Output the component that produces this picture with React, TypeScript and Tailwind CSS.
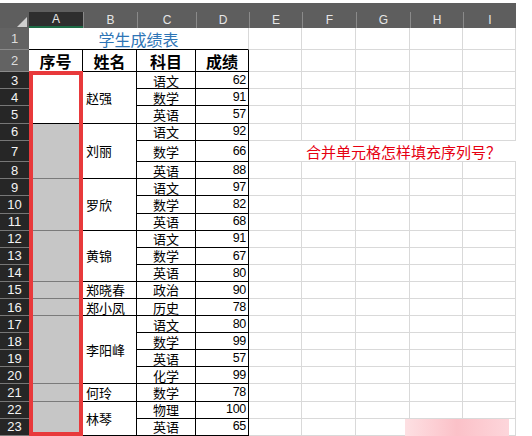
import React from 'react';

// Fonts
const CJK = "font-['Noto_Sans_CJK_SC','Noto_Sans',sans-serif]";
const NUM = "font-['Liberation_Sans','Noto_Sans_CJK_SC',sans-serif]";

// Excel row -> grid row-start (grid row 1 is the column header strip)
const ROW: Record<number, string> = {
    1: 'row-start-2',
    2: 'row-start-3',
    3: 'row-start-4',
    4: 'row-start-5',
    5: 'row-start-6',
    6: 'row-start-7',
    7: 'row-start-8',
    8: 'row-start-9',
    9: 'row-start-10',
    10: 'row-start-11',
    11: 'row-start-12',
    12: 'row-start-13',
    13: 'row-start-14',
    14: 'row-start-15',
    15: 'row-start-16',
    16: 'row-start-17',
    17: 'row-start-18',
    18: 'row-start-19',
    19: 'row-start-20',
    20: 'row-start-21',
    21: 'row-start-22',
    22: 'row-start-23',
    23: 'row-start-24',
};

const SPAN: Record<number, string> = {
    1: 'row-span-1',
    2: 'row-span-2',
    3: 'row-span-3',
    4: 'row-span-4',
};

type Group = {
    name: string;
    start: number;
    subjects: [string, number][];
};

const groups: Group[] = [
    { name: '赵强', start: 3, subjects: [['语文', 62], ['数学', 91], ['英语', 57]] },
    { name: '刘丽', start: 6, subjects: [['语文', 92], ['数学', 66], ['英语', 88]] },
    { name: '罗欣', start: 9, subjects: [['语文', 97], ['数学', 82], ['英语', 68]] },
    { name: '黄锦', start: 12, subjects: [['语文', 91], ['数学', 67], ['英语', 80]] },
    { name: '郑晓春', start: 15, subjects: [['政治', 90]] },
    { name: '郑小凤', start: 16, subjects: [['历史', 78]] },
    {
        name: '李阳峰',
        start: 17,
        subjects: [['语文', 80], ['数学', 99], ['英语', 57], ['化学', 99]],
    },
    { name: '何玲', start: 21, subjects: [['数学', 78]] },
    { name: '林琴', start: 22, subjects: [['物理', 100], ['英语', 65]] },
];

const colHeaders = [
    { letter: 'B', col: 'col-start-3' },
    { letter: 'C', col: 'col-start-4' },
    { letter: 'D', col: 'col-start-5' },
    { letter: 'E', col: 'col-start-6' },
    { letter: 'F', col: 'col-start-7' },
    { letter: 'G', col: 'col-start-8' },
    { letter: 'H', col: 'col-start-9' },
    { letter: 'I', col: 'col-start-10' },
];

const rowNumbers = Array.from({ length: 23 }, (_, i) => i + 1);

const App = () => {
    return (
        <div className="w-[532px] h-[436px] overflow-hidden bg-white relative pt-[3px]">
            {/* Top strip above column letters */}
            <div className="w-[516px] h-[9px] bg-[#5e5e5e]" />

            <div className="grid w-[516px] grid-cols-[29px_54px_54px_59px_53px_53px_54px_54px_53px_53px] grid-rows-[16px_22px_22px_repeat(4,17.2px)_21.5px_repeat(16,17.1px)]">
                {/* Corner */}
                <div className="row-start-1 col-start-1 bg-[#5e5e5e] flex items-end justify-end pr-[2px] pb-[1px]">
                    <svg width="10" height="10" viewBox="0 0 10 10">
                        <polygon points="10,0 10,10 0,10" fill="#cfcfcf" />
                    </svg>
                </div>

                {/* Column letters */}
                <div
                    className={`row-start-1 col-start-2 bg-[#2e2e2e] border-b-2 border-[#1d6b45] flex items-center justify-center text-[12px] text-[#e6e6e6] ${NUM}`}
                >
                    A
                </div>
                {colHeaders.map((h) => (
                    <div
                        key={h.letter}
                        className={`row-start-1 ${h.col} bg-[#5e5e5e] border-l border-[#8a8a8a] flex items-center justify-center text-[12px] text-[#e6e6e6] ${NUM}`}
                    >
                        {h.letter}
                    </div>
                ))}

                {/* Row numbers */}
                {rowNumbers.map((n) => (
                    <div
                        key={n}
                        className={`col-start-1 ${ROW[n]} flex items-center justify-center text-[13px] leading-none ${NUM} ${
                            n <= 2
                                ? 'bg-[#636363] text-[#dcdcdc] border-b border-[#8a8a8a]'
                                : 'bg-[#262626] text-[#f4f4f4] border-b border-[#777777]'
                        }`}
                    >
                        {n}
                    </div>
                ))}

                {/* Title */}
                <div
                    className={`col-start-2 col-span-4 row-start-2 border-b border-r border-b-black border-r-[#d9d9d9] flex items-center justify-center text-[16px] leading-none text-[#2e75b6] ${CJK}`}
                >
                    学生成绩表
                </div>

                {/* Header row */}
                {[
                    { t: '序号', col: 'col-start-2' },
                    { t: '姓名', col: 'col-start-3' },
                    { t: '科目', col: 'col-start-4' },
                    { t: '成绩', col: 'col-start-5' },
                ].map((h) => (
                    <div
                        key={h.t}
                        className={`row-start-3 ${h.col} border-r border-b border-black flex items-center justify-center text-[16px] font-bold leading-none text-black ${CJK}`}
                    >
                        {h.t}
                    </div>
                ))}

                {/* Data */}
                {groups.map((g, gi) => (
                    <React.Fragment key={g.name}>
                        <div
                            className={`col-start-2 ${ROW[g.start]} ${SPAN[g.subjects.length]} border-r border-b ${
                                gi === 0
                                    ? 'bg-white border-black'
                                    : 'bg-[#c6c6c6] border-[#7a7a7a]'
                            }`}
                        />
                        <div
                            className={`col-start-3 ${ROW[g.start]} ${SPAN[g.subjects.length]} border-r border-b border-black flex items-center pl-[3px] text-[13px] leading-none text-black ${CJK}`}
                        >
                            {g.name}
                        </div>
                        {g.subjects.map(([subject, score], si) => (
                            <React.Fragment key={subject + si}>
                                <div
                                    className={`col-start-4 ${ROW[g.start + si]} border-r border-b border-black flex items-center justify-center text-[13px] leading-none text-black ${CJK}`}
                                >
                                    {subject}
                                </div>
                                <div
                                    className={`col-start-5 ${ROW[g.start + si]} border-r border-b border-black flex items-center justify-end pr-[2px] text-[12.5px] leading-none tracking-[-0.3px] text-black ${NUM}`}
                                >
                                    {score}
                                </div>
                            </React.Fragment>
                        ))}
                    </React.Fragment>
                ))}

                {/* Question text across E7:I7 */}
                <div
                    className={`row-start-8 col-start-6 col-span-5 border-b border-[#d9d9d9] flex items-center pl-[57px] whitespace-nowrap text-[15px] leading-none text-[#e60012] ${CJK}`}
                >
                    合并单元格怎样填充序列号？
                </div>

                {/* Red selection frame over A3:A23 */}
                <div className="col-start-2 row-start-4 row-span-21 -mt-px border-4 border-[#e8393b] z-10 pointer-events-none" />

                {/* Empty gridline cells (auto-placed into the remaining slots) */}
                {Array.from({ length: 110 }, (_, i) => (
                    <div key={i} className="border-r border-b border-[#d9d9d9] bg-white" />
                ))}
            </div>

            {/* Blurred watermark patch */}
            <div className="absolute left-[405px] top-[419px] w-[104px] h-[17px] bg-linear-to-r from-[#fde0e3] via-[#fbc1c8] to-[#fdd6db]" />
        </div>
    );
};

export default App;
